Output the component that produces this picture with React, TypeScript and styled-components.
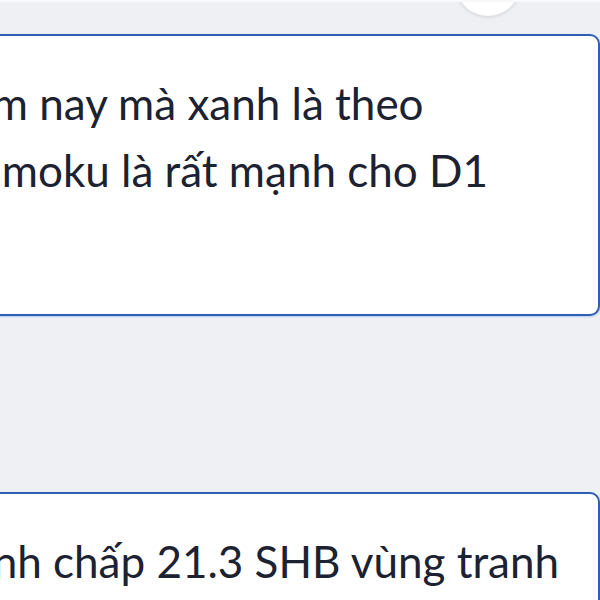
import React from "react";
import styled, { createGlobalStyle } from "styled-components";

const GlobalStyle = createGlobalStyle`
  html, body {
    margin: 0;
    padding: 0;
    background: #eef0f3;
    overflow: hidden;
  }
  body {
    font-family: "Lato", "Noto Sans", sans-serif;
  }
`;

const Page = styled.div`
  width: 600px;
  height: 600px;
  overflow: hidden;
  background: #eef0f3;
  border-top: 2px solid #f8f9fb;
  box-sizing: border-box;
`;

const TopBar = styled.div`
  height: 32px;
  display: flex;
  justify-content: flex-end;
  padding-right: 80px;
`;

const RoundButton = styled.div`
  width: 64px;
  height: 64px;
  margin-top: -50px;
  border-radius: 50%;
  background: #ffffff;
  box-shadow: 0 1px 4px rgba(0, 0, 0, 0.12);
`;

const Feed = styled.div`
  margin-left: -120px;
  width: 720px;
  display: flex;
  flex-direction: column;
  gap: 176px;
`;

const Card = styled.div<{ $minHeight?: number }>`
  background: #ffffff;
  border: 2px solid #2d60b4;
  border-radius: 10px;
  box-shadow: 0 1px 2px rgba(70, 130, 230, 0.35);
  padding: 34px 20px 0 52px;
  min-height: ${(p) => p.$minHeight ?? 0}px;
  box-sizing: border-box;
`;

const Body = styled.p`
  margin: 0;
  font-size: 44px;
  line-height: 67px;
  color: #1c2231;
`;

export default function App() {
  return (
    <>
      <GlobalStyle />
      <Page>
        <TopBar>
          <RoundButton />
        </TopBar>
        <Feed>
          <Card $minHeight={282}>
            <Body>
              Hôm nay mà xanh là theo
              <br />
              Ichimoku là rất mạnh cho D1
            </Body>
          </Card>
          <Card $minHeight={200}>
            <Body>Tranh chấp 21.3 SHB vùng tranh chấp</Body>
          </Card>
        </Feed>
      </Page>
    </>
  );
}
